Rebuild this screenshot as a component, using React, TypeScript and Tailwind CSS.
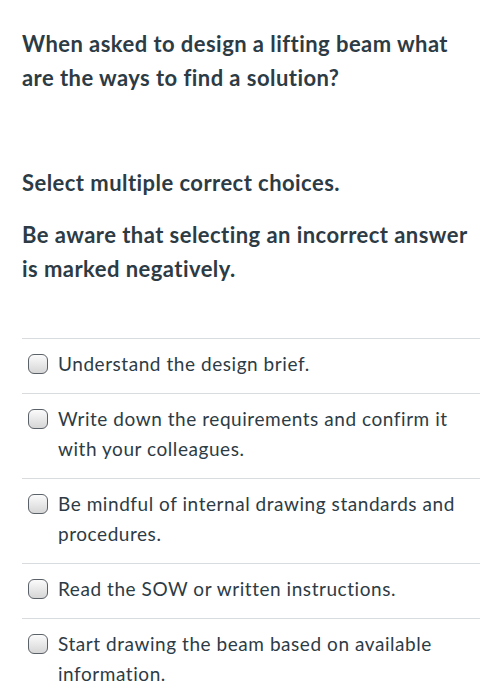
const options = [
  "Understand the design brief.",
  "Write down the requirements and confirm it with your colleagues.",
  "Be mindful of internal drawing standards and procedures.",
  "Read the SOW or written instructions.",
  "Start drawing the beam based on available information.",
];

function Checkbox() {
  return (
    <span className="mt-[5px] h-[20px] w-[20px] shrink-0 rounded-[6px] border-[1.5px] border-[#5b6168] bg-gradient-to-b from-[#fbfbfb] to-[#d6d6d6]" />
  );
}

export default function App() {
  return (
    <div className="min-h-[700px] bg-white pl-[22px] pr-[12px] pt-[27px] text-[#2d3b45] font-['Lato',sans-serif]">
      <h1 className="text-[22px] font-bold leading-[34px] tracking-[0.45px]">
        When asked to design a lifting beam what are the ways to find a solution?
      </h1>
      <p className="mt-[71px] text-[22px] font-bold leading-[34px] tracking-[0.45px]">
        Select multiple correct choices.
      </p>
      <p className="mt-[18px] text-[22px] font-bold leading-[34px] tracking-[0.45px]">
        Be aware that selecting an incorrect answer is marked negatively.
      </p>
      <ul className="mt-[52px] border-t border-[#d9dcdf]">
        {options.map((o) => (
          <li key={o} className="flex items-start gap-[10px] border-b border-[#d9dcdf] pl-[6px] pr-[20px] pt-[10px] pb-[14px]">
            <Checkbox />
            <span className="text-[19px] leading-[30px] tracking-[0.55px]">{o}</span>
          </li>
        ))}
      </ul>
    </div>
  );
}
